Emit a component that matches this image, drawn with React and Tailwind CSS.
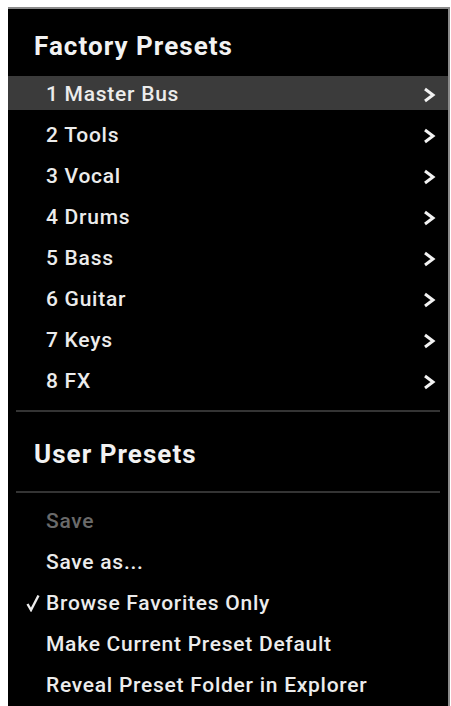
import React from "react";

const factory = [
  "1 Master Bus",
  "2 Tools",
  "3 Vocal",
  "4 Drums",
  "5 Bass",
  "6 Guitar",
  "7 Keys",
  "8 FX",
];

function Chevron() {
  return (
    <svg width="14" height="16" viewBox="0 0 14 16" className="shrink-0">
      <polyline
        points="3,2 11,8 3,14"
        fill="none"
        stroke="#f2f2f2"
        strokeWidth="3"
        strokeLinejoin="miter"
      />
    </svg>
  );
}

function Check() {
  return (
    <svg width="14" height="18" viewBox="0 0 14 18" className="absolute left-[18px] top-[9px]">
      <path d="M1.5 10 L5 16 L12.5 1.5" fill="none" stroke="#ececec" strokeWidth="2.4" />
    </svg>
  );
}

function MenuRow({ label, active, sub, dim, checked }) {
  return (
    <div
      className={
        "relative flex h-[34px] items-center justify-between pt-[3px] pl-[38px] pr-[12px] " +
        (active ? "bg-[#3b3b3b]" : "")
      }
    >
      {checked && <Check />}
      <span className={dim ? "text-[#6a6a6a]" : "text-[#ececec]"}>{label}</span>
      {sub && <Chevron />}
    </div>
  );
}

export default function App() {
  return (
    <div className="min-h-screen bg-white pl-[8px] pt-[7px]">
      <div
        className="w-[442px] h-[699px] overflow-hidden bg-black border-t-2 border-r-2 border-[#8a8a8a] text-[21px] font-medium tracking-[0.035em]"
        style={{ fontFamily: "Roboto, 'Liberation Sans', sans-serif" }}
      >
        {/* factory presets */}
        <div className="h-[67px] pt-[23px] pl-[26px] text-[26px] font-bold leading-[28px] tracking-[0.04em] text-[#f2f2f2]">
          Factory Presets
        </div>
        <div className="flex flex-col gap-[7px]">
          {factory.map((name, i) => (
            <MenuRow key={name} label={name} active={i === 0} sub />
          ))}
        </div>
        <div className="mx-[8px] mt-[13px] h-[2px] bg-[#343434]" />

        {/* user presets */}
        <div className="h-[79px] pt-[28px] pl-[26px] text-[26px] font-bold leading-[28px] tracking-[0.04em] text-[#f2f2f2]">
          User Presets
        </div>
        <div className="mx-[8px] h-[2px] bg-[#343434]" />
        <div className="mt-[10px] flex flex-col gap-[7px]">
          <MenuRow label="Save" dim />
          <MenuRow label="Save as..." />
          <MenuRow label="Browse Favorites Only" checked />
          <MenuRow label="Make Current Preset Default" />
          <MenuRow label="Reveal Preset Folder in Explorer" />
        </div>
      </div>
    </div>
  );
}
